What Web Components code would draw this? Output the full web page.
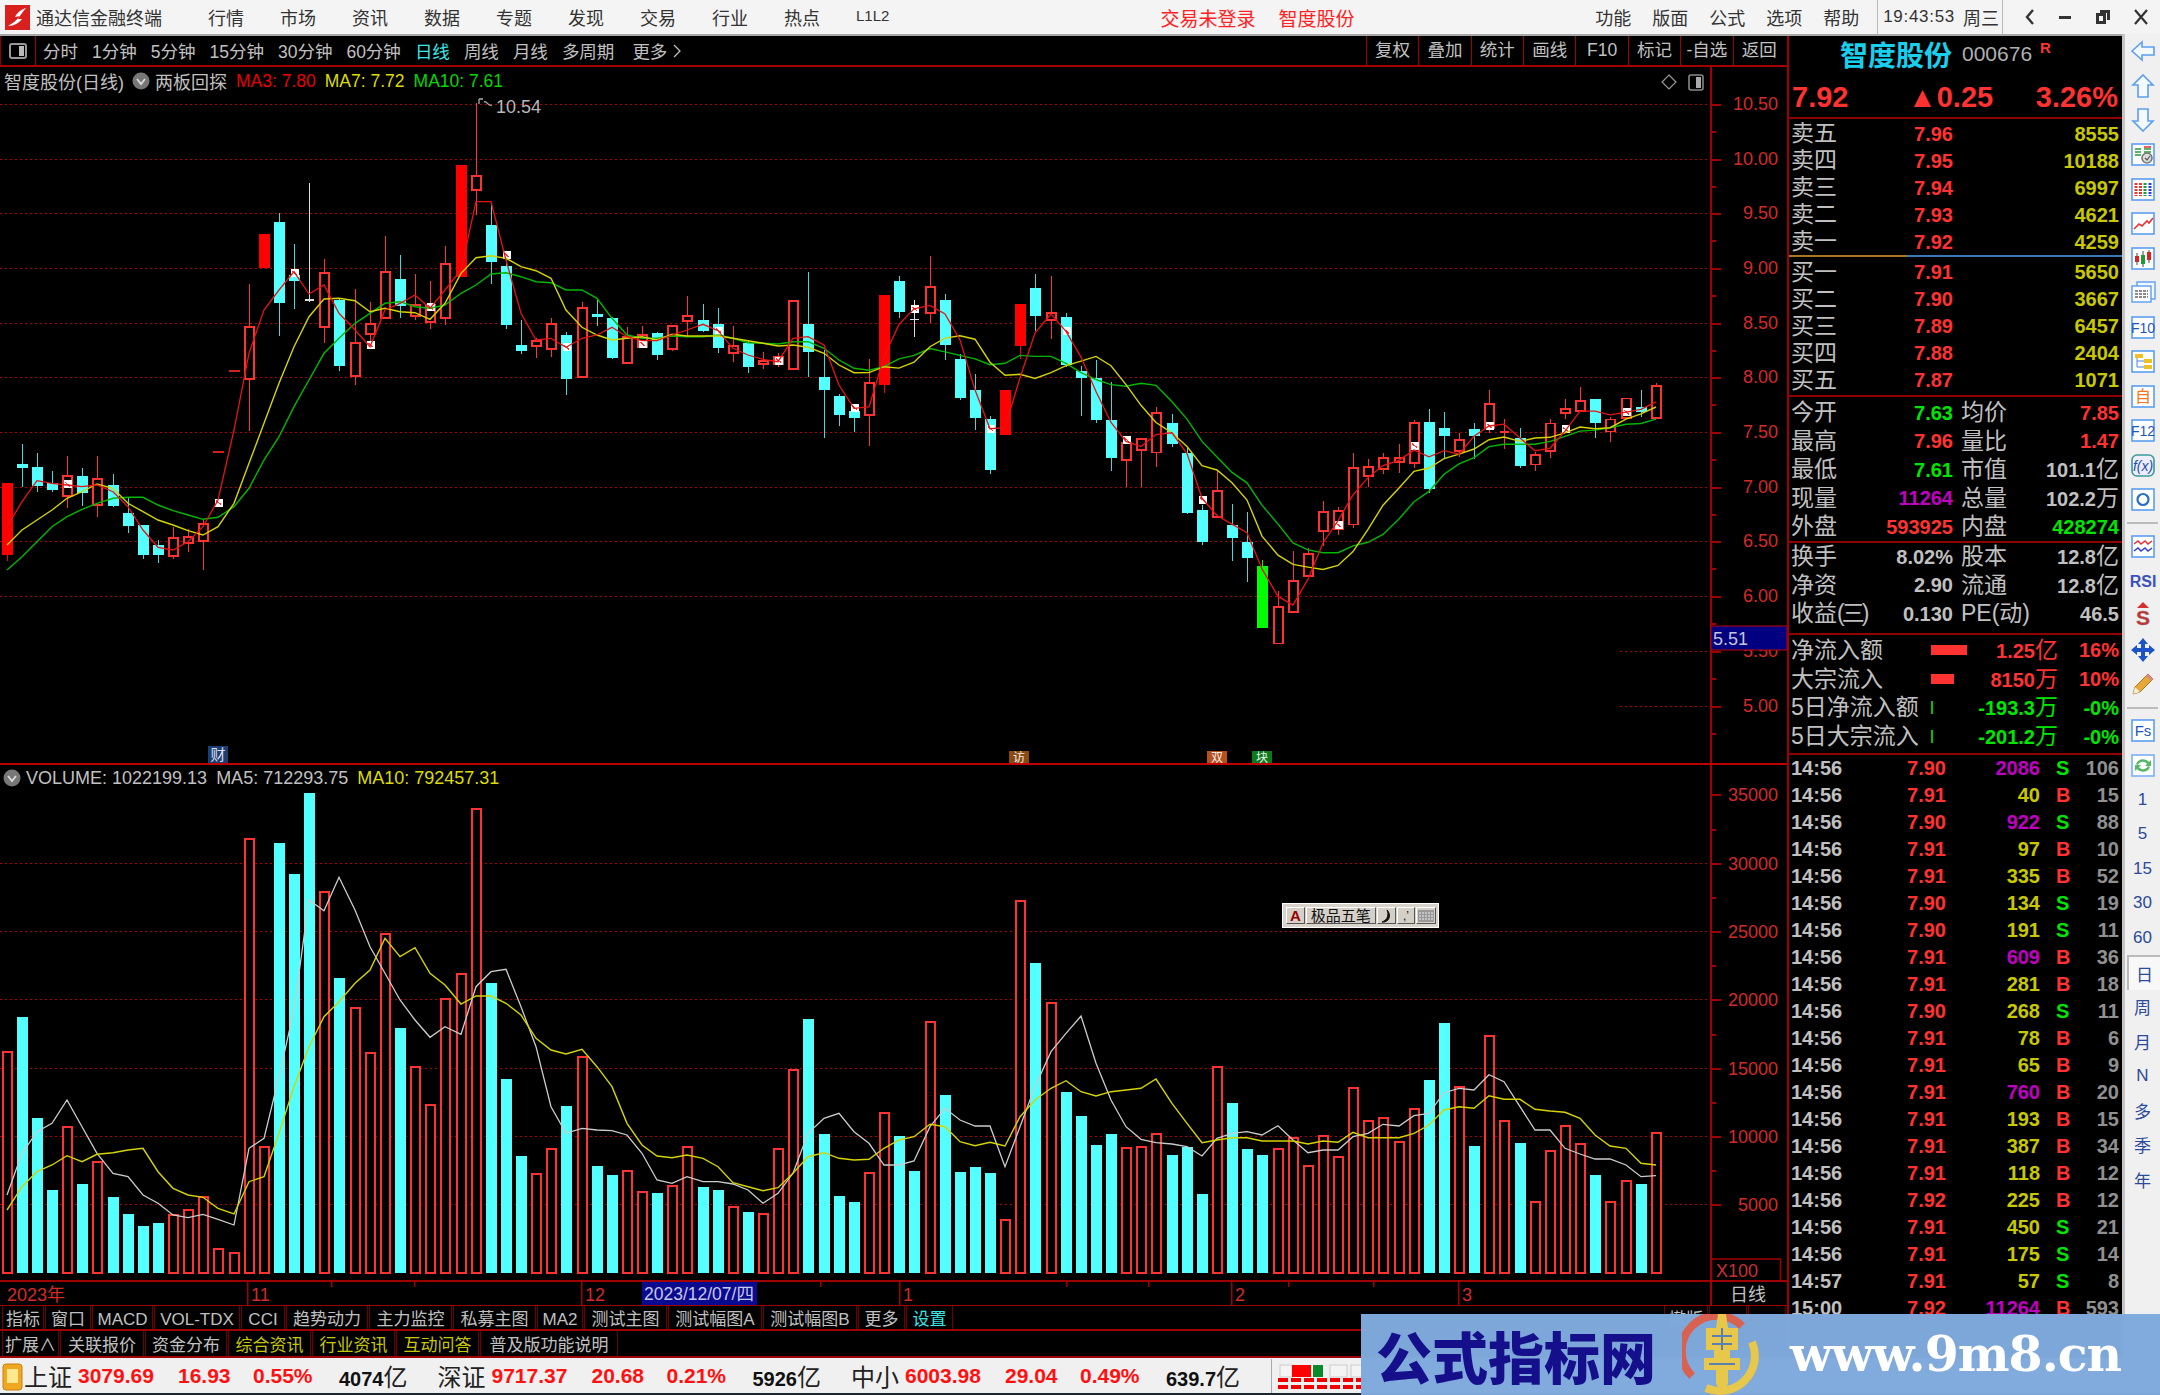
<!DOCTYPE html>
<html>
<head>
<meta charset="utf-8">
<title>通达信金融终端</title>
<style>
    html, body { margin: 0; padding: 0; background: #000; }
</style>
</head>
<body>
<tdx-app></tdx-app>
<script>
const SANS = `"Liberation Sans","Noto Sans CJK SC",sans-serif`;
const DIM = '#c0c0c0', RED = '#ff3232', YEL = '#c8c800', GRN = '#00e600', PUR = '#c000c0';

// each element renders once, when it lands in the page
class Part extends HTMLElement {
    connectedCallback() {
        if (this.shadowRoot) return;
        const root = this.attachShadow({ mode: 'open' });
        root.innerHTML = `<style>${this.css()}</style>${this.html()}`;
    }
    css() { return ''; }
    html() { return '<slot></slot>'; }
}

/* ---------- data, read off the picture (y in crop units, see kY1 etc) ---------- */
// [type, wickTop, bodyTop, bodyBottom, wickBottom, whiteMark]
const K1 = [
    ['r',1180,1180,1395,1412],['c',1062,1122,1134,1192],['c',1090,1130,1187,1205],['c',1143,1178,1200,1205],
    ['h',1098,1158,1218,1255,1183],['c',1135,1158,1210,1247],['h',1098,1168,1245,1282],['c',1152,1185,1247,1250],
    ['c',1225,1270,1308,1328],['c',1305,1305,1395,1408],['c',1350,1365,1395,1418],['h',1312,1344,1398,1408],
    ['h',1318,1340,1358,1385],['h',1290,1302,1354,1440],['d',1082,1082,1082,1082,1238],['d',840,840,840,840],
    ['h',582,712,868,1022],['r',432,432,535,535],['c',370,396,638,738],['c',463,555,572,657,550],
    ['w',280,628,628,635],['h',508,550,710,760],['c',625,630,828,842],['h',598,758,858,886],
    ['h',635,703,732,770,765],['h',437,546,683,683],['c',496,567,648,685],['h',553,645,678,690],
    ['h',572,645,695,716,652],['h',468,523,683,706],['r',225,225,562,562],['h',38,258,300,375],
    ['c',342,405,517,582],['c',490,527,706,716,495],['c',690,766,782,792],['h',745,752,768,805],
    ['h',685,703,778,800],['c',725,735,868,914,772],['h',635,655,862,862],['c',630,672,680,708],
    ['c',682,685,805,808],['h',710,740,818,822],['h',708,735,772,772,762],['c',725,730,796,810],
    ['h',705,708,778,782],['h',618,677,692,740],['c',643,690,724,725],['c',653,703,774,788,722],
    ['h',708,768,790,815],['c',750,760,832,850],['h',785,812,822,838],['h',790,800,822,832,812],
    ['h',630,632,836,840],['c',545,703,787,862],['c',780,860,900,1044],['c',912,918,976,1008],
    ['c',945,962,985,1026,953]
];
const K2 = [
    ['h',345,415,508,597],['r',160,160,422,443],['c',105,118,209,227],['w',175,228,228,283,200],
    ['h',47,137,213,240],['c',158,175,305,348],['c',330,345,458,466],['c',388,437,518,553],
    ['c',510,520,667,680,548],['r',437,437,565,565],['r',187,187,309,345],['c',100,140,222,265],
    ['h',105,213,232,287],['c',213,223,363,370,265],['c',365,380,401,510],['c',348,400,524,530],
    ['c',412,524,632,672],['h',572,590,640,718,580],['h',578,577,609,716],['h',485,503,617,658],
    ['c',505,532,592,602],['c',600,618,793,797],['c',770,785,876,886,754],['h',670,730,805,805],
    ['c',768,828,866,932],['c',790,877,923,993],['g',930,947,1128,1128],['h',1020,1066,1172,1172],
    ['h',903,990,1080,1080],['h',893,912,975,975],['h',758,790,844,888],['h',775,786,840,856,828],
    ['h',618,663,826,835],['h',636,659,686,716],['h',618,633,665,680],['h',592,632,644,676],
    ['h',523,532,648,662,597],['c',492,528,723,735],['c',500,545,570,635],['h',560,580,612,630],
    ['c',532,550,570,636],['h',436,476,545,560,540],['x',520,556,556,606],['c',545,576,657,662],
    ['h',615,624,652,670],['h',520,533,613,632],['h',462,490,503,520,550],['h',428,467,497,497],
    ['c',462,463,530,575],['h',515,521,556,587],['h',458,460,516,516,500],['c',436,485,500,515],
    ['h',415,425,518,518]
];
const MA3 = [[1310,1235,1172,1180,1185,1190,1185,1205,1250,1320,1372,1380,1355,1310,1230,1020,790,660,600,545,612,585,670,720,770,660,640,615,655,600,540,335,335,510,670,750,745,772,745,735,712,740,752,752,735,720,703,722,775,795,808,815,745,740,765,885,955],
    [485,340,245,200,190,215,290,435,548,545,400,270,215,265,340,440,530,585,600,565,560,620,750,800,825,850,955,1035,1060,985,880,815,740,690,655,640,610,630,612,622,570,540,535,575,612,605,555,497,497,508,500,492,470]];
const MA7 = [[1365,1320,1290,1260,1225,1205,1182,1195,1240,1265,1290,1305,1322,1335,1310,1240,1120,1000,880,770,680,627,625,632,665,655,665,668,688,640,550,503,497,505,530,542,565,660,712,735,750,745,740,750,733,738,738,738,745,752,760,768,765,772,790,825,848],
    [385,368,372,355,310,285,278,288,355,393,390,402,385,365,352,338,365,420,480,530,560,600,655,668,705,755,860,915,942,950,957,945,905,840,770,720,672,662,635,622,607,580,572,585,575,573,560,543,548,545,520,505,485]];
const MA10 = [[1440,1400,1355,1310,1280,1258,1240,1225,1222,1222,1245,1262,1275,1288,1282,1250,1195,1110,1040,950,870,790,745,700,670,640,635,650,655,645,610,585,552,548,560,575,578,600,600,625,685,735,745,745,738,740,740,735,745,758,760,762,755,755,775,810,835],
    [378,368,345,335,315,325,335,345,362,358,335,338,338,358,385,405,420,425,416,422,470,520,585,630,675,705,770,825,880,900,908,908,888,878,855,810,760,730,680,650,632,600,593,593,593,585,570,555,552,545,535,533,520]];
// volume: [c=cyan|h=hollow, top]
const V1 = 'h877 c772 c1073 c1290 h1102 c1272 h1205 c1312 c1362 c1398 c1388 h1365 h1350 h1312 h1466 h1480 h237 h1160 c250 c343 c100 h395 c655 h745 h880 h521 c803 h921 h1034 h718 h643 h147 c668 c957 c1187 h1242 h1168 c1038 h890 c1217 c1245 h1232 h1295 c1298 h1277 h1160 c1280 c1290 h1340 c1357 h1362 h1168 h930 c776 c1123 c1307 c1325'.split(' ');
const V2 = 'h1180 h1000 c1067 c1172 h727 c946 c1175 c1162 c1180 h1320 h362 c550 h668 c937 c1009 c1095 c1063 h1105 h1100 h1063 c1126 c1100 c1243 h861 c968 c1108 c1126 h1108 h1075 h1158 h1068 h1132 h924 h1023 h1015 h1087 h987 c901 c730 h920 c1099 h767 h1023 c1090 h1267 h1113 h1037 h1091 c1184 h1267 h1204 c1211 h1060'.split(' ');
const VW = [[1305,1180,1115,1090,1020,1100,1180,1240,1250,1305,1330,1365,1373,1363,1378,1395,1165,1135,950,750,420,452,352,450,560,640,720,780,832,800,823,680,635,628,740,860,1040,1120,1105,1110,1112,1125,1180,1260,1270,1250,1265,1265,1272,1290,1330,1300,1240,1120,1075,1060,1115],
    [1090,1155,1155,1143,1040,985,1020,1038,1038,1160,1040,920,815,760,708,850,960,1040,1078,1088,1092,1100,1128,1075,1060,1055,1065,1037,1080,1118,1110,1110,1070,1060,1033,1038,1007,1000,938,925,930,884,905,980,1050,1050,1105,1122,1137,1137,1155,1190,1187]];
const VY = [[1350,1280,1235,1215,1187,1205,1183,1178,1170,1165,1235,1285,1305,1312,1345,1362,1265,1250,1120,980,860,770,725,670,630,535,590,563,640,675,732,708,708,730,765,835,870,882,868,920,980,1090,1155,1188,1193,1185,1195,1220,1268,1280,1292,1283,1240,1190,1178,1195,1200],
    [1138,1105,1080,1070,1033,1040,1085,1097,1087,1098,1010,960,925,902,935,948,935,930,925,897,970,1030,1088,1080,1073,1073,1083,1083,1083,1092,1083,1087,1057,1073,1073,1073,1060,1035,990,980,985,947,958,958,988,993,997,1015,1065,1098,1105,1150,1155]];

const barX = i => Math.round(6.6 + 15.13 * i);
const kY1 = z => 90 + z / 3, kY2 = z => 240 + z / 2.904;
const vY1 = z => 760 + z / 3, vY2 = z => 780 + z / 3;
const poly = (pair, f1, f2, color, w) => {
    const pts = pair[0].map((z, i) => `${barX(i)},${f1(z).toFixed(1)}`)
        .concat(pair[1].map((z, i) => `${barX(i + 57)},${f2(z).toFixed(1)}`));
    return `<polyline points="${pts.join(' ')}" fill="none" stroke="${color}" stroke-width="${w}"/>`;
};

/* ---------- title bar ---------- */
customElements.define('tdx-titlebar', class extends Part {
    css() {
        return `:host { display: flex; align-items: center; height: 34px; background: #f4f4f4; border-bottom: 2px solid #a8a8a8;
                    font: 18px ${SANS}; color: #333; }
                svg { display: block; flex: none; }
                .logo { margin: 0 6px 0 5px; }
                .menu { display: flex; gap: 36px; margin-left: 46px; }
                .red { color: #f22; display: flex; gap: 23px; margin-left: 271px; font-size: 19px; }
                .tools { display: flex; gap: 21px; margin-left: auto; }
                .clock { display: flex; gap: 8px; align-items: center; height: 34px; margin-left: 18px; padding: 0 3px 0 5px;
                         border-left: 1px solid #bbb; border-right: 1px solid #bbb; font-size: 17px; letter-spacing: .7px; }
                .clock span + span { letter-spacing: 0; }
                .win { display: flex; align-items: center; width: 148px; margin-left: 9px; justify-content: space-around; }`;
    }
    html() {
        return `<svg class="logo" width="25" height="25" viewBox="0 0 25 25"><rect width="25" height="25" fill="#d9201f"/>
                  <path d="M21 3 C15 5 12 8 10 12 L15 11 C12 15 8 18 3 21 C9 21 14 18 17 14 L13 14 C15 10 18 7 21 3Z" fill="#fff"/></svg>
                <span>通达信金融终端</span>
                <div class="menu"><span>行情</span><span>市场</span><span>资讯</span><span>数据</span><span>专题</span><span>发现</span><span>交易</span><span>行业</span><span>热点</span><span style="font-size:15px;line-height:24px">L1L2</span></div>
                <div class="red"><span>交易未登录</span><span>智度股份</span></div>
                <div class="tools"><span>功能</span><span>版面</span><span>公式</span><span>选项</span><span>帮助</span></div>
                <div class="clock"><span>19:43:53</span><span style="font-size:18px">周三</span></div>
                <div class="win">
                  <svg width="14" height="20" viewBox="0 0 14 20"><path d="M10 3 L4 10 L10 17" fill="none" stroke="#333" stroke-width="2.4"/></svg>
                  <svg width="14" height="20" viewBox="0 0 14 20"><rect x="1" y="9" width="12" height="3" fill="#333"/></svg>
                  <svg width="18" height="20" viewBox="0 0 18 20"><path d="M6 3H16V13H13V6H6Z M2 6H12V17H2Z M5 9V14H9V9Z" fill="#333" fill-rule="evenodd"/></svg>
                  <svg width="16" height="20" viewBox="0 0 16 20"><path d="M2 3 L14 17 M14 3 L2 17" stroke="#333" stroke-width="2.2"/></svg>
                </div>`;
    }
});

/* ---------- period bar over the chart ---------- */
customElements.define('tdx-periodbar', class extends Part {
    css() {
        return `:host { display: flex; align-items: center; height: 29px; border-bottom: 2px solid #a00000; font: 17.5px ${SANS}; color: ${DIM}; }
                .box { width: 34px; height: 29px; border-right: 1px solid #a00000; border-left: 1px solid #800; display: flex; align-items: center; justify-content: center; flex: none; }
                .items { display: flex; gap: 14px; margin-left: 7px; align-items: center; }
                .on { color: #38e8e8; }
                .more { display: flex; align-items: center; gap: 6px; margin-left: 4px; }
                .right { display: flex; margin-left: auto; padding-right: 2px; }
                .right span { width: 52.4px; height: 29px; line-height: 29px; text-align: center; border-left: 1px solid #a00000; box-sizing: border-box; }`;
    }
    html() {
        const right = ['复权', '叠加', '统计', '画线', 'F10', '标记', '-自选', '返回'];
        return `<div class="box"><svg width="20" height="18" viewBox="0 0 20 18"><rect x="2" y="2" width="16" height="14" rx="2" fill="none" stroke="#999" stroke-width="2"/><rect x="11" y="4" width="5" height="10" fill="#bbb"/></svg></div>
                <div class="items"><span>分时</span><span>1分钟</span><span>5分钟</span><span>15分钟</span><span>30分钟</span><span>60分钟</span><span class="on">日线</span><span>周线</span><span>月线</span><span>多周期</span>
                  <span class="more">更多<svg width="8" height="16" viewBox="0 0 8 16"><path d="M1 2 L7 8 L1 14" fill="none" stroke="#c0c0c0" stroke-width="1.3"/></svg></span></div>
                <div class="right">${right.map(t => `<span>${t}</span>`).join('')}</div>`;
    }
});

/* ---------- price pane ---------- */
customElements.define('tdx-kline', class extends Part {
    css() {
        return `:host { display: block; position: relative; height: 698px; font: 18px ${SANS}; color: ${DIM}; }
                svg.chart { display: block; }
                .legend { position: absolute; left: 4px; top: 2px; display: flex; align-items: center; height: 24px; white-space: nowrap; }
                .legend b { font-weight: normal; font-size: 17.5px; margin-left: 9px; }
                .dot { width: 18px; height: 18px; margin: 0 5px 0 8px; display: block; }`;
    }
    html() {
        const y = p => 158.5 + (10 - p) * 109.4;
        let g = '', o = '';
        for (let p = 10.5; p >= 6; p -= .5) g += `<line x1="0" x2="1710" y1="${Math.round(y(p))}" y2="${Math.round(y(p))}"/>`;
        [5.5, 5].forEach(p => g += `<line x1="1620" x2="1710" y1="${Math.round(y(p))}" y2="${Math.round(y(p))}"/>`);
        for (let p = 10.5; p >= 4.9; p -= .5) {
            const yy = Math.round(y(p));
            o += `<rect x="1712" y="${yy}" width="9" height="2" fill="#a00000"/><rect x="1712" y="${yy + 27}" width="4" height="2" fill="#a00000"/>`;
            o += `<text x="1778" y="${yy + 6}" font-size="18" fill="#d42a2a" text-anchor="end">${p.toFixed(2)}</text>`;
        }
        const one = (c, i, f) => {
            const x = barX(i), [t, a, b, e, d, m] = c;
            const top = f(a), y1 = f(b), y2 = f(e), bot = f(d);
            let s = '';
            const stick = col => `<rect x="${x}" y="${top}" width="1.4" height="${bot - top}" fill="${col}"/>`;
            if (t === 'h') s += stick(RED) + `<rect x="${x - 4}" y="${y1}" width="9" height="${y2 - y1}" fill="#000" stroke="${RED}" stroke-width="1.8"/>`;
            if (t === 'c') s += stick('#45d8d8') + `<rect x="${x - 5}" y="${y1}" width="11" height="${y2 - y1}" fill="#54ffff"/>`;
            if (t === 'r') s += stick('#f00') + `<rect x="${x - 5}" y="${y1}" width="11" height="${y2 - y1}" fill="#f00"/>`;
            if (t === 'g') s += stick('#0f0') + `<rect x="${x - 5}" y="${y1}" width="11" height="${y2 - y1}" fill="#0f0"/>`;
            if (t === 'w') s += stick('#ddd') + `<rect x="${x - 4}" y="${y1}" width="9" height="1.6" fill="#ddd"/>`;
            if (t === 'x') s += stick(RED) + `<rect x="${x - 4}" y="${y1}" width="9" height="1.6" fill="${RED}"/>`;
            if (t === 'd') s += `<rect x="${x - 5}" y="${y1}" width="11" height="2" fill="#d02020"/>`;
            if (m) s += `<rect x="${x - 3.5}" y="${f(m) - 4}" width="8" height="8" fill="#fff"/><path d="M${x - 2} ${f(m) - 2} L${x + 3} ${f(m) + 2}" stroke="#f33" stroke-width="1.2"/>`;
            return s;
        };
        const candles = K1.map((c, i) => one(c, i, kY1)).join('') + K2.map((c, i) => one(c, i + 57, kY2)).join('');
        const tag = (cx, col, t) => `<rect x="${cx - 10}" y="751" width="20" height="12" fill="${col}"/><text x="${cx}" y="761.5" font-size="12" fill="#eee" text-anchor="middle">${t}</text>`;
        return `<svg class="chart" width="1787" height="698" viewBox="0 67 1787 698" font-family='${SANS}'>
                  <g stroke="#b00000" stroke-width="1" stroke-dasharray="2 3" shape-rendering="crispEdges">${g}</g>
                  <g shape-rendering="crispEdges">${candles}</g>
                  ${poly(MA10, kY1, kY2, '#00b800', 1.4)}${poly(MA7, kY1, kY2, '#d4d400', 1.4)}${poly(MA3, kY1, kY2, '#e41414', 1.3)}
                  <path d="M479 99 H483 M479 99 V104 M484 102 C487 100 488 107 492 105" fill="none" stroke="#aaa" stroke-width="1.3"/>
                  <text x="496" y="113" font-size="18" fill="#b8b8b8">10.54</text>
                  <path d="M1669 75 L1676 82 L1669 89 L1662 82 Z" fill="none" stroke="#999" stroke-width="1.2"/>
                  <rect x="1689" y="75" width="14" height="15" rx="2" fill="none" stroke="#888" stroke-width="1.6"/><rect x="1696" y="77" width="5" height="11" fill="#aaa"/>
                  <rect x="1710" y="67" width="2" height="698" fill="#a00000"/>
                  ${o}
                  <rect x="1711" y="626" width="76" height="24" fill="#000080" stroke="#c00000" stroke-width="1"/>
                  <text x="1713" y="645" font-size="18" fill="#c4c4dc">5.51</text>
                  <rect x="208" y="746" width="20" height="17" fill="#1c3f70"/><text x="218" y="760" font-size="15" fill="#dde" text-anchor="middle">财</text>
                  ${tag(1019, '#8a4a10', '访')}${tag(1217, '#b8501a', '双')}${tag(1262, '#0a7a1a', '块')}
                  <rect x="0" y="763" width="1787" height="2" fill="#c00000"/>
                </svg>
                <div class="legend"><span>智度股份(日线)</span>
                  <svg class="dot" viewBox="0 0 18 18"><circle cx="9" cy="9" r="8.5" fill="#777"/><path d="M5 7 L9 12 L13 7" fill="none" stroke="#ddd" stroke-width="1.8"/></svg>
                  <span>两板回探</span><b style="color:#e80000">MA3: 7.80</b><b style="color:#dcdc00">MA7: 7.72</b><b style="color:#00d800">MA10: 7.61</b></div>`;
    }
});

/* ---------- volume pane ---------- */
customElements.define('tdx-volume', class extends Part {
    css() {
        return `:host { display: block; position: relative; height: 517px; font: 18px ${SANS}; color: ${DIM}; }
                svg.chart { display: block; }
                .legend { position: absolute; left: 3px; top: 1px; display: flex; align-items: center; gap: 9px; height: 24px; white-space: nowrap; }
                .dot { width: 18px; height: 18px; display: block; margin-right: -4px; }`;
    }
    html() {
        let g = '', o = '';
        for (let v = 5000; v <= 35000; v += 5000) {
            const y = Math.round(1272.5 - v * 0.013665);
            if (v < 35000) g += `<line x1="0" x2="1710" y1="${y}" y2="${y}"/>`;
            o += `<rect x="1712" y="${y}" width="9" height="2" fill="#a00000"/><rect x="1712" y="${y - 34}" width="4" height="2" fill="#a00000"/>`;
            o += `<text x="1778" y="${y + 7}" font-size="18" fill="#d42a2a" text-anchor="end">${v}</text>`;
        }
        const bar = (s, i, f) => {
            const x = barX(i), top = f(+s.slice(1));
            return s[0] === 'c'
                ? `<rect x="${x - 5}" y="${top}" width="11" height="${1273 - top}" fill="#54ffff"/>`
                : `<rect x="${x - 4}" y="${top}" width="9" height="${1273 - top}" fill="#000" stroke="${RED}" stroke-width="1.8"/>`;
        };
        const bars = V1.map((s, i) => bar(s, i, vY1)).join('') + V2.map((s, i) => bar(s, i + 57, vY2)).join('');
        return `<svg class="chart" width="1787" height="517" viewBox="0 765 1787 517" font-family='${SANS}'>
                  <g stroke="#b00000" stroke-width="1" stroke-dasharray="2 3" shape-rendering="crispEdges">${g}</g>
                  <g shape-rendering="crispEdges">${bars}</g>
                  ${poly(VW, vY1, vY2, '#cccccc', 1.3)}${poly(VY, vY1, vY2, '#d4d400', 1.4)}
                  <rect x="1710" y="765" width="2" height="517" fill="#a00000"/>
                  ${o}
                  <rect x="1711.5" y="1259" width="69" height="22" fill="none" stroke="#a00000" stroke-width="1.5"/>
                  <text x="1716" y="1277" font-size="18" fill="#c83030">X100</text>
                  <rect x="0" y="1280" width="1787" height="2" fill="#a00000"/>
                </svg>
                <div class="legend">
                  <svg class="dot" viewBox="0 0 18 18"><circle cx="9" cy="9" r="8.5" fill="#777"/><path d="M5 7 L9 12 L13 7" fill="none" stroke="#ddd" stroke-width="1.8"/></svg>
                  <span>VOLUME: 1022199.13</span><span>MA5: 712293.75</span><span style="color:#dcdc00">MA10: 792457.31</span></div>`;
    }
});

/* ---------- date axis ---------- */
customElements.define('tdx-dateaxis', class extends Part {
    css() { return `:host { display: block; height: 24px; } svg { display: block; }`; }
    html() {
        const marks = [[247, '11'], [581, '12'], [899, '1'], [1231, '2'], [1458, '3']];
        const ticks = [331, 414, 820, 1066, 1148, 1288, 1373];
        return `<svg width="1787" height="24" viewBox="0 1282 1787 24" font-family='${SANS}' font-size="18">
                  <text x="7" y="1301" fill="#d42a2a">2023年</text>
                  ${marks.map(m => `<rect x="${m[0]}" y="1282" width="1.5" height="24" fill="#a00000"/><text x="${m[0] + 4}" y="1301" fill="#d42a2a">${m[1]}</text>`).join('')}
                  ${ticks.map(x => `<rect x="${x}" y="1282" width="1.5" height="5" fill="#a00000"/>`).join('')}
                  <rect x="642" y="1282" width="115" height="23" fill="#0a0a90"/>
                  <text x="644" y="1300" fill="#c8c8e8" font-size="17.5">2023/12/07/四</text>
                  <rect x="1710" y="1282" width="2" height="24" fill="#a00000"/>
                  <text x="1730" y="1301" fill="${DIM}">日线</text>
                  <rect x="0" y="1305" width="1787" height="1.5" fill="#a00000"/>
                </svg>`;
    }
});

/* ---------- tabs ---------- */
customElements.define('tdx-tab', class extends Part {
    css() {
        const w = this.getAttribute('w');
        return `:host { display: block; flex: none; width: ${w}px; box-sizing: border-box; text-align: center; white-space: nowrap; overflow: hidden;
                    border: 1px solid #700000; border-width: 0 1px; margin-right: 1px; color: ${this.getAttribute('c') || DIM}; }`;
    }
});
customElements.define('tdx-tabrow', class extends Part {
    css() {
        const h = +this.getAttribute('h');
        return `:host { display: flex; height: ${h}px; padding-left: 2px; box-sizing: border-box; border-bottom: 2px solid #a00000;
                    font: 17px/${h + 2}px ${SANS}; }
                ::slotted(.push) { margin-left: auto; }`;
    }
});

/* ---------- quote panel ---------- */
customElements.define('tdx-quote', class extends Part {
    css() {
        return `:host { display: block; width: 335px; height: 1322px; overflow: hidden; box-sizing: border-box; flex: none; border-left: 2px solid #a00000;
                    font: bold 20px ${SANS}; color: ${DIM}; }
                .head { display: flex; align-items: center; height: 36px; padding-left: 51px; }
                .name { font-size: 28px; color: #18d0ee; }
                .code { font-size: 21px; font-weight: normal; color: #b0b0b0; margin-left: 10px; }
                .r { font-size: 15px; color: #f33; margin: -14px 0 0 8px; }
                .px { display: grid; grid-template-columns: 116px 1fr auto; align-items: center; height: 47px; padding: 6px 4px 0 3px; box-sizing: border-box;
                      font-size: 29px; color: ${RED}; border-bottom: 2px solid #900000; }
                .row { display: grid; align-items: center; padding: 0 3px 0 2px; white-space: nowrap; line-height: 1; }
                .row > span:nth-child(n+2) { text-align: right; }
                .row i { font-style: normal; font-weight: normal; font-size: 23px; line-height: 1; color: ${DIM}; }
                .row i small { font-size: 23px; letter-spacing: -3px; }
                .row em { font-style: normal; font-weight: normal; line-height: 1; }
                .book { grid-template-columns: 60px 102px 1fr; height: 27px; }
                .stat { grid-template-columns: 60px 102px 8px 56px 1fr; height: 28.4px; }
                .stat.b { height: 28.5px; }
                .flow { grid-template-columns: 140px 40px 87px 1fr; height: 28.8px; }
                .flow u { display: block; height: 10px; background: #ff3232; }
                .flow u.t { width: 2px; height: 13px; background: #00c000; }
                .tick { grid-template-columns: 60px 95px 94px 39px 1fr; height: 27px; }
                .row.tick span:nth-child(4) { text-align: left; padding-left: 16px; }
                .row.tick span:nth-child(1) { text-align: left; color: ${DIM}; }
                .row.tick span:nth-child(5) { color: #909090; }
                .sep { height: 2px; background: #900000; }
                .sep.two { background: linear-gradient(90deg, #a87820 0, #a87820 118px, #3878b8 118px); }`;
    }
    html() {
        const book = (rows) => rows.map(r => `<div class="row book"><i>${r[0]}</i><span style="color:${RED}">${r[1]}</span><span style="color:${YEL}">${r[2]}</span></div>`).join('');
        const stat = (rows, cls) => rows.map(r => `<div class="row stat ${cls || ''}"><i>${r[0]}</i><span style="color:${r[2]}">${r[1]}</span><i style="grid-column:4">${r[3]}</i><span style="color:${r[5]}">${r[4]}</span></div>`).join('');
        const cjk = s => s.replace(/([亿万])/, '<em style="font-size:23px">$1</em>');
        const flow = (rows) => rows.map(r => `<div class="row flow"><i>${r[0]}</i><div>${r[1] ? `<u style="width:${r[1]}px"></u>` : '<u class="t"></u>'}</div><span style="color:${r[4]}">${cjk(r[2])}</span><span style="color:${r[4]}">${r[3]}</span></div>`).join('');
        const ticks = [
            ['14:56','7.90','2086','S','106',1],['14:56','7.91','40','B','15'],['14:56','7.90','922','S','88',1],['14:56','7.91','97','B','10'],
            ['14:56','7.91','335','B','52'],['14:56','7.90','134','S','19'],['14:56','7.90','191','S','11'],['14:56','7.91','609','B','36',1],
            ['14:56','7.91','281','B','18'],['14:56','7.90','268','S','11'],['14:56','7.91','78','B','6'],['14:56','7.91','65','B','9'],
            ['14:56','7.91','760','B','20',1],['14:56','7.91','193','B','15'],['14:56','7.91','387','B','34'],['14:56','7.91','118','B','12'],
            ['14:56','7.92','225','B','12'],['14:56','7.91','450','S','21'],['14:56','7.91','175','S','14'],['14:57','7.91','57','S','8'],
            ['15:00','7.92','11264','B','593',1]
        ].map(t => `<div class="row tick"><span>${t[0]}</span><span style="color:${RED}">${t[1]}</span><span style="color:${t[5] ? PUR : YEL}">${t[2]}</span><span style="color:${t[3] === 'S' ? GRN : RED}">${t[3]}</span><span>${t[4]}</span></div>`).join('');
        return `<div class="head"><span class="name">智度股份</span><span class="code">000676</span><span class="r">R</span></div>
                <div class="px"><span>7.92</span><span>▲0.25</span><span>3.26%</span></div>
                <div style="height:1.4px"></div>
                ${book([['卖五','7.96','8555'],['卖四','7.95','10188'],['卖三','7.94','6997'],['卖二','7.93','4621'],['卖一','7.92','4259']])}
                <div class="sep two"></div>
                <div style="height:1.5px"></div>
                ${book([['买一','7.91','5650'],['买二','7.90','3667'],['买三','7.89','6457'],['买四','7.88','2404'],['买五','7.87','1071']])}
                <div style="height:1.5px"></div><div class="sep"></div>
                <div style="height:1.4px"></div>
                ${stat([['今开','7.63',GRN,'均价','7.85',RED],['最高','7.96',RED,'量比','1.47',RED],['最低','7.61',GRN,'市值',cjk('101.1亿'),DIM],['现量','11264',PUR,'总量',cjk('102.2万'),DIM],['外盘','593925',RED,'内盘','428274',GRN]])}
                <div class="sep"></div>
                ${stat([['换手','8.02%',DIM,'股本',cjk('12.8亿'),DIM],['净资','2.90',DIM,'流通',cjk('12.8亿'),DIM],['收益<small>(三)</small>','0.130',DIM,'PE(动)','46.5',DIM]], 'b')}
                <div style="height:5px"></div><div class="sep"></div>
                <div style="height:.7px"></div>
                ${flow([['净流入额',36,'1.25亿','16%',RED],['大宗流入',23,'8150万','10%',RED],['5日净流入额',0,'-193.3万','-0%',GRN],['5日大宗流入',0,'-201.2万','-0%',GRN]])}
                <div style="height:1.8px"></div><div class="sep"></div>
                ${ticks}`;
    }
});

/* ---------- right tool column ---------- */
const B = '#5b9ff0';
const frame = (inner, stroke) => `<svg width="26" height="25" viewBox="0 0 26 25" font-family='${SANS}'><rect x="2" y="2" width="22" height="21" fill="#fff" stroke="${stroke || B}" stroke-width="1.6"/>${inner}</svg>`;
const label = (t, col, size) => `<text x="13" y="18" text-anchor="middle" font-size="${size || 15}" fill="${col || '#2a5fc8'}">${t}</text>`;
const ICONS = [
    `<svg width="26" height="24" viewBox="0 0 26 24"><path d="M2 12 L12 3 V8 H24 V16 H12 V21 Z" fill="#f4f8ff" stroke="${B}" stroke-width="1.6"/></svg>`,
    `<svg width="24" height="26" viewBox="0 0 24 26"><path d="M12 2 L22 12 H17 V24 H7 V12 H2 Z" fill="#f4f8ff" stroke="${B}" stroke-width="1.6"/></svg>`,
    `<svg width="24" height="26" viewBox="0 0 24 26"><path d="M12 24 L22 14 H17 V2 H7 V14 H2 Z" fill="#f4f8ff" stroke="${B}" stroke-width="1.6"/></svg>`,
    frame(`<path d="M5 7H11M5 10H11M5 13H11M14 7H21M14 10H21" stroke="#2a9a3a" stroke-width="1.6"/><path d="M14 5H21" stroke="#e33" stroke-width="1.6"/><circle cx="17" cy="16" r="5" fill="#ddd" stroke="#777" stroke-width="1.6"/><path d="M15 16 L17 18 L20 14" fill="none" stroke="#555" stroke-width="1.2"/>`),
    frame(`<path d="M6 6V19" stroke="#e33" stroke-width="3" stroke-dasharray="2 1"/><path d="M10.5 6V19" stroke="#e33" stroke-width="3" stroke-dasharray="2 1"/><path d="M15 6V19" stroke="#1a9a3a" stroke-width="3" stroke-dasharray="2 1"/><path d="M20 6V19" stroke="#2a3ae0" stroke-width="3" stroke-dasharray="2 1"/>`),
    frame(`<path d="M4 18 L9 13 L12 15 L17 10 L19 12 L23 7" fill="none" stroke="#e83030" stroke-width="1.6"/>`),
    frame(`<path d="M7 7V19 M13 5V21 M19 4V17" stroke="#444"/><rect x="5" y="10" width="4" height="6" fill="#e02020"/><rect x="11" y="9" width="4" height="9" fill="#1a9a3a"/><rect x="17" y="6" width="4" height="8" fill="#e02020"/>`),
    `<svg width="26" height="25" viewBox="0 0 26 25"><rect x="7" y="2" width="18" height="17" fill="#f4f8ff" stroke="${B}" stroke-width="1.4"/><rect x="2" y="6" width="19" height="16" fill="#fff" stroke="${B}" stroke-width="1.4"/><path d="M5 11H18M5 14H18M5 17H18" stroke="#666" stroke-width="1.6" stroke-dasharray="3 1"/></svg>`,
    frame(label('F10', '#1f55c0', 14)),
    frame(`<rect x="5" y="5" width="8" height="4" fill="#f0c020"/><rect x="14" y="10" width="8" height="4" fill="#f0c020"/><rect x="14" y="16" width="8" height="4" fill="#f0c020"/><path d="M7 9V18H14M7 12H14" fill="none" stroke="#4a8ae0"/>`),
    frame(label('自', '#f07820', 16)),
    frame(label('F12', '#1f55c0', 14)),
    `<svg width="26" height="25" viewBox="0 0 26 25" font-family='${SANS}'><rect x="2" y="2" width="22" height="21" rx="5" fill="#eef" stroke="#3a9a9a" stroke-width="1.6"/><text x="13" y="18" text-anchor="middle" font-size="14" font-style="italic" fill="#1f4fb0">f(x)</text></svg>`,
    frame(`<circle cx="13" cy="12.5" r="5.5" fill="none" stroke="#2a70c8" stroke-width="2.2"/>`),
    'sep',
    frame(`<path d="M4 10 L8 7 L11 10 L15 7 L18 10 L22 7" fill="none" stroke="#e83030" stroke-width="1.5"/><path d="M4 17 L8 14 L11 17 L15 14 L18 17 L22 14" fill="none" stroke="#3040d0" stroke-width="1.5"/>`),
    `<svg width="26" height="25" viewBox="0 0 26 25" font-family='${SANS}'><text x="13" y="19" text-anchor="middle" font-size="16" font-weight="bold" fill="#3a50c0">RSI</text></svg>`,
    `<svg width="26" height="28" viewBox="0 0 26 28" font-family='${SANS}'><path d="M13 1 L19 7 H7 Z" fill="#d83030"/><text x="13" y="24" text-anchor="middle" font-size="21" font-weight="bold" fill="#c83030" stroke="#888" stroke-width=".4">S</text></svg>`,
    `<svg width="26" height="26" viewBox="0 0 26 26"><path d="M13 1 L18 7 H15 V11 H19 V8 L25 13 L19 18 V15 H15 V19 H18 L13 25 L8 19 H11 V15 H7 V18 L1 13 L7 8 V11 H11 V7 H8 Z" fill="#1c54c8"/></svg>`,
    `<svg width="26" height="26" viewBox="0 0 26 26"><path d="M3 23 L5 16 L18 3 L23 8 L10 21 Z" fill="#e8a838" stroke="#a87820"/><path d="M18 3 L23 8 L21 10 L16 5Z" fill="#d88"/><path d="M3 23 L5 16 L10 21 Z" fill="#eed"/></svg>`,
    'sep',
    frame(label('Fs', '#1f55c0', 15)),
    frame(`<path d="M6 11 C8 5 16 5 19 9 L21 7 V13 H15 L17 11 C15 8 10 8 8 12Z M20 14 C18 20 10 20 7 16 L5 18 V12 H11 L9 14 C11 17 16 17 18 13Z" fill="#58b868"/>`, '#7ab0f8')
];
customElements.define('tdx-tool', class extends Part {
    css() {
        const on = this.hasAttribute('on');
        return `:host { display: flex; align-items: center; justify-content: center; height: 34.5px; font: 17px ${SANS}; color: #2a4a9a; box-sizing: border-box;
                    ${on ? 'background:#f8f8f8;border-left:2px solid #bbb;border-top:2px solid #bbb;margin-left:2px;' : ''} }`;
    }
});
customElements.define('tdx-sidebar', class extends Part {
    css() {
        return `:host { display: block; flex: none; width: 38px; height: 1324px; margin-top: -2px; background: #f0f0f0; border-left: 3px solid #c4c4c4; box-sizing: border-box; overflow: hidden; }
                .sep { height: 12px; display: flex; align-items: center; } .sep::after { content: ""; display: block; width: 100%; margin: 0 2px; border-top: 2px solid #bbb; }`;
    }
    html() {
        const tools = ICONS.map(s => s === 'sep' ? '<div class="sep"></div>' : `<tdx-tool>${s}</tdx-tool>`).join('');
        const labels = ['1', '5', '15', '30', '60'].map(t => `<tdx-tool>${t}</tdx-tool>`).join('');
        const cycle = ['日', '周', '月', 'N', '多', '季', '年'].map((t, i) => `<tdx-tool ${i ? '' : 'on'}>${t}</tdx-tool>`).join('');
        return tools + labels + cycle;
    }
});

/* ---------- index strip at the bottom ---------- */
customElements.define('tdx-index', class extends Part {
    css() {
        return `:host { display: grid; grid-template-columns: 54px 100px 75px 86px 98.5px; align-items: center; flex: none; white-space: nowrap; font: bold 21px ${SANS}; color: #f11; }
                i { font: normal 24px ${SANS}; color: #222; }
                b { color: #111; font-size: 20px; } em { font: normal 24px ${SANS}; color: #222; }`;
    }
    html() {
        const g = a => this.getAttribute(a);
        return `<i>${g('name')}</i><span>${g('val')}</span><span>${g('chg')}</span><span>${g('pct')}</span><b>${g('amt')}<em>亿</em></b>`;
    }
});
customElements.define('tdx-status', class extends Part {
    css() {
        return `:host { display: flex; align-items: center; height: 37px; box-sizing: border-box; padding-left: 2px; background: #f0f0f0; border-bottom: 2px solid #1c2530; }
                svg { display: block; flex: none; }
                .bars { margin-left: 6px; border-left: 1px solid #aaa; padding-left: 6px; }`;
    }
    html() {
        const dash = [];
        for (let i = 0; i < 7; i++) dash.push(`<rect x="${i * 13}" y="19" width="10" height="4" fill="#f00000"/><rect x="${i * 13}" y="26" width="10" height="4" fill="#f00000"/>`);
        return `<svg width="22" height="30" viewBox="0 0 22 30"><rect x="1" y="3" width="19" height="26" rx="3" fill="#f0a820" stroke="#c88010"/><rect x="5" y="8" width="11" height="14" fill="#ffe890"/></svg>
                <tdx-index name="上证" val="3079.69" chg="16.93" pct="0.55%" amt="4074"></tdx-index>
                <tdx-index name="深证" val="9717.37" chg="20.68" pct="0.21%" amt="5926"></tdx-index>
                <tdx-index name="中小" val="6003.98" chg="29.04" pct="0.49%" amt="639.7"></tdx-index>
                <svg class="bars" width="92" height="34" viewBox="0 0 92 34">
                  <rect x="2" y="6" width="12" height="12" fill="#f4f4f4" stroke="#ccc"/><rect x="14" y="6" width="19" height="12" fill="#f00"/><rect x="35" y="6" width="10" height="12" fill="#0a8a2a"/><rect x="52" y="6" width="17" height="12" fill="#f4f4f4" stroke="#ccc"/><rect x="73" y="6" width="17" height="12" fill="#f4f4f4" stroke="#ccc"/>${dash.join('')}</svg>`;
    }
});

/* ---------- floating pieces ---------- */
customElements.define('tdx-ime', class extends Part {
    css() {
        return `:host { position: absolute; left: 1282px; top: 903px; display: flex; gap: 1px; height: 25px; width: 157px; box-sizing: border-box; padding: 3px 2px 3px 3px;
                    background: #d8d4cc; border: 1px solid #fff; font: 15px/18px ${SANS}; color: #111; }
                span { display: flex; align-items: center; justify-content: center; background: #d4d0c8; border: 1px solid; border-color: #fff #555 #555 #fff; box-sizing: border-box; }`;
    }
    html() {
        return `<span style="width:19px;color:#900;font-weight:bold">A</span><span style="width:71px;white-space:nowrap;overflow:hidden">极品五笔</span>
                <span style="width:19px"><svg width="12" height="14" viewBox="0 0 12 14"><path d="M7 1 C9 5 8 11 2 13 C9 14 12 6 7 1Z" fill="#111" stroke="#111"/></svg></span>
                <span style="width:19px;font-size:12px">,&#8217;</span>
                <span style="width:20px"><svg width="16" height="12" viewBox="0 0 16 12"><rect width="16" height="12" fill="#999"/><path d="M1 3H15M1 6H15M1 9H15" stroke="#eee" stroke-dasharray="2 1"/></svg></span>`;
    }
});
customElements.define('tdx-watermark', class extends Part {
    css() {
        return `:host { position: absolute; left: 1361px; top: 1314px; width: 799px; height: 81px; background: rgba(126,170,219,.985); display: flex; align-items: center; overflow: hidden; }
                .cn { font: 900 56px/77px "Noto Sans CJK SC",sans-serif; color: #150f8c; margin-left: 15px; white-space: nowrap; width: 306px; }
                .url { font: bold 49px/75px "DejaVu Serif",serif; color: #fff; margin-left: 28px; white-space: nowrap; letter-spacing: -1px; }
                svg { display: block; flex: none; }`;
    }
    html() {
        return `<span class="cn">公式指标网</span>
                <svg width="80" height="81" viewBox="0 0 80 81">
                  <path d="M10 62 A35 35 0 0 1 60 12" fill="none" stroke="#d9614f" stroke-width="8"/>
                  <path d="M70 28 A35 35 0 0 1 24 74" fill="none" stroke="#e8c84a" stroke-width="8"/>
                  <path d="M36 0 H44 L46 14 H56 V36 H48 V44 H58 V56 H46 V70 L40 78 L34 70 V56 H22 V44 H32 V36 H24 V14 H34 Z" fill="#e8c84a"/>
                  <path d="M30 22 H50 M30 30 H50 M27 50 H53 M40 14 V36" stroke="#5a7fb0" stroke-width="2" fill="none"/>
                </svg>
                <span class="url">www.9m8.cn</span>`;
    }
});

/* ---------- page ---------- */
const TABS1 = [['指标',42],['窗口',46],['MACD',61],['VOL-TDX',86],['CCI',44],['趋势动力',82],['主力监控',83],['私募主图',83],['MA2',46],['测试主图',83],['测试幅图A',94],['测试幅图B',94],['更多',47],['设置',47,'#38e8e8']];
const TABS2 = [['扩展∧',57],['关联报价',84],['资金分布',82],['综合资讯',83,YEL],['行业资讯',83,YEL],['互动问答',83,YEL],['普及版功能说明',138]];
const tabs = list => list.map(t => `<tdx-tab w="${t[1]}" ${t[2] ? `c="${t[2]}"` : ''}>${t[0]}</tdx-tab>`).join('');

customElements.define('tdx-app', class extends Part {
    css() {
        return `:host { display: block; position: relative; width: 2160px; height: 1395px; overflow: hidden; background: #000; }
                .main { display: flex; height: 1322px; }
                .left { width: 1787px; flex: none; display: flex; flex-direction: column; }`;
    }
    html() {
        return `<tdx-titlebar></tdx-titlebar>
                <div class="main">
                  <div class="left">
                    <tdx-periodbar></tdx-periodbar>
                    <tdx-kline></tdx-kline>
                    <tdx-volume></tdx-volume>
                    <tdx-dateaxis></tdx-dateaxis>
                    <tdx-tabrow h="25">${tabs(TABS1)}<tdx-tab class="push" w="44">撤版</tdx-tab><tdx-tab w="38"></tdx-tab><tdx-tab w="38"></tdx-tab></tdx-tabrow>
                    <tdx-tabrow h="27">${tabs(TABS2)}</tdx-tabrow>
                  </div>
                  <tdx-quote></tdx-quote>
                  <tdx-sidebar></tdx-sidebar>
                </div>
                <tdx-status></tdx-status>
                <tdx-ime></tdx-ime>
                <tdx-watermark></tdx-watermark>`;
    }
});
</script>
</body>
</html>
